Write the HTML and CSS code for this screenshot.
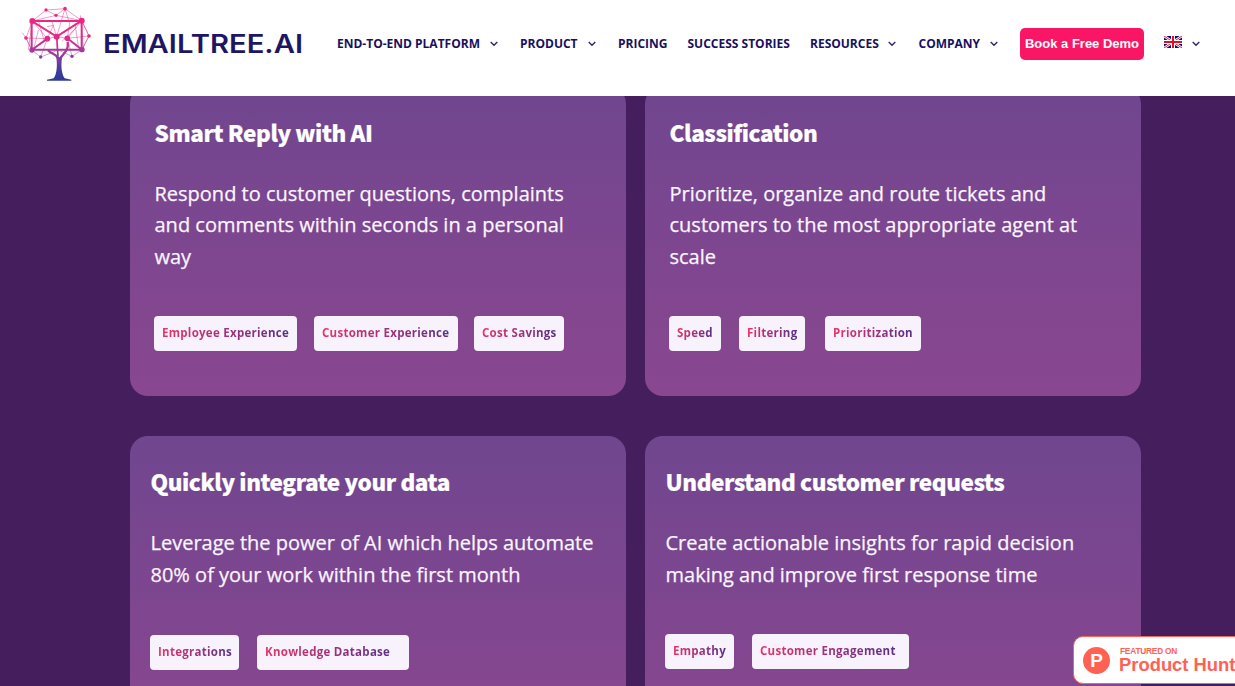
FILE: index.html
```html
<!DOCTYPE html>
<html lang="en">
<head>
<meta charset="utf-8">
<title>EmailTree.AI</title>
<link rel="stylesheet" href="styles.css">
</head>
<body>
<header class="header">
  <a class="logo">
    <svg class="tree" viewBox="0 0 255 270">
      <defs>
        <linearGradient id="treeFill" gradientUnits="userSpaceOnUse" x1="0" y1="20" x2="0" y2="240">
          <stop offset="0" stop-color="#f0247f"/><stop offset=".42" stop-color="#e22a8b"/><stop offset=".68" stop-color="#8e3d9f"/><stop offset=".86" stop-color="#3f3d9c"/><stop offset="1" stop-color="#2f3a98"/>
        </linearGradient>
      </defs>
      <g fill="none" stroke="url(#treeFill)">
        <path stroke-width="2" opacity=".7" d="M52 63 93 30 150 26 200 62 222 108 201 149 171 169 130 150 77 171 50 150 33 114 52 63M93 30 123 46 150 26M52 63 123 46 200 62M52 63 97 116 33 114M22 98 33 114 50 150M97 116 115 76 96 80M150 26 125 110 110 62M150 26 164 72 157 115 222 108M157 115 200 62M196 46 206 149M52 63 40 150M97 116 125 110 157 115M97 116 77 171M157 115 171 169M201 149 222 108 200 62M58 140 70 90M140 125 185 82M70 60 88 125M180 70 190 140"/>
        <path stroke-width="6" d="M52 63H200V149H50V63L125 110 200 62M50 150 97 116M201 149 157 115"/>
        <path stroke-width="5" d="M125 110 129 170"/>
        <path stroke-width="7" d="M130 180C128 160 112 166 99 151M135 176C146 158 162 153 158 126"/>
      </g>
      <g fill="url(#treeFill)">
        <path d="M123 166C128 195 126 222 116 235L96 239V242H169V239L149 235C138 219 137 190 143 165L134 172Z"/>
        <circle cx="93" cy="30" r="5"/><circle cx="150" cy="26" r="5.5"/><circle cx="123" cy="46" r="5"/>
        <circle cx="33" cy="114" r="5.5"/><circle cx="222" cy="108" r="5.5"/><circle cx="77" cy="171" r="5"/><circle cx="171" cy="169" r="5"/>
        <circle cx="52" cy="63" r="9"/><circle cx="200" cy="62" r="9"/><circle cx="97" cy="116" r="8.5"/><circle cx="157" cy="115" r="8.5"/><circle cx="125" cy="110" r="9"/><circle cx="51" cy="150" r="8"/><circle cx="201" cy="149" r="8"/>
      </g>
    </svg>
    <svg class="wordmark" viewBox="0 0 204 30"><text x="3" y="24" textLength="200" lengthAdjust="spacingAndGlyphs">EMAILTREE.AI</text></svg>
  </a>
  <nav class="nav">
    <a class="item n1">END-TO-END PLATFORM<svg class="chev" viewBox="0 0 8 6"><path d="M.7 1 4 4.3 7.3 1"/></svg></a>
    <a class="item n2">PRODUCT<svg class="chev" viewBox="0 0 8 6"><path d="M.7 1 4 4.3 7.3 1"/></svg></a>
    <a class="item n3">PRICING</a>
    <a class="item n4">SUCCESS STORIES</a>
    <a class="item n5">RESOURCES<svg class="chev" viewBox="0 0 8 6"><path d="M.7 1 4 4.3 7.3 1"/></svg></a>
    <a class="item n6">COMPANY<svg class="chev" viewBox="0 0 8 6"><path d="M.7 1 4 4.3 7.3 1"/></svg></a>
  </nav>
  <a class="demo">Book a Free Demo</a>
  <a class="lang">
    <svg class="flag" viewBox="0 0 18 12"><path fill="#0c0c7c" d="M0 0h18v12H0z"/><path stroke="#fff" stroke-width="2.6" d="M0 0 18 12M18 0 0 12"/><path stroke="#e02030" stroke-width="1" d="M0 0 18 12M18 0 0 12"/><path stroke="#fff" stroke-width="4" d="M9 0V12M0 6H18"/><path stroke="#e01020" stroke-width="2" d="M9 0V12M0 6H18"/></svg>
    <svg class="chev" viewBox="0 0 8 6"><path d="M.7 1 4 4.3 7.3 1"/></svg>
  </a>
</header>
<main class="grid">
  <section class="card first">
    <h2>Smart Reply with AI</h2>
    <p>Respond to customer questions, complaints<br>and comments within seconds in a personal<br>way</p>
    <div class="tags"><span class="tag t143"><b>Employee Experience</b></span><span class="tag t144"><b>Customer Experience</b></span><span class="tag t90"><b>Cost Savings</b></span></div>
  </section>
  <section class="card first">
    <h2>Classification</h2>
    <p>Prioritize, organize and route tickets and<br>customers to the most appropriate agent at<br>scale</p>
    <div class="tags"><span class="tag t52"><b>Speed</b></span><span class="tag t66"><b>Filtering</b></span><span class="tag t96"><b>Prioritization</b></span></div>
  </section>
  <section class="card second">
    <h2>Quickly integrate your data</h2>
    <p>Leverage the power of AI which helps automate<br>80% of your work within the first month</p>
    <div class="tags low"><span class="tag t89"><b>Integrations</b></span><span class="tag t152"><b>Knowledge Database</b></span></div>
  </section>
  <section class="card second">
    <h2>Understand customer requests</h2>
    <p>Create actionable insights for rapid decision<br>making and improve first response time</p>
    <div class="tags"><span class="tag t69"><b>Empathy</b></span><span class="tag t157"><b>Customer Engagement</b></span></div>
  </section>
</main>
<a class="hunt">
  <span class="disc">P</span>
  <span class="words"><span class="small">FEATURED ON</span><span class="big">Product Hunt</span></span>
</a>
</body>
</html>
```
FILE: styles.css
```css
* { box-sizing: border-box; }
body { margin: 0; width: 1235px; height: 686px; overflow: hidden; background: #451e5e; font-family: "Open Sans", sans-serif; }
.header { position: relative; z-index: 2; height: 96px; background: #fff; display: flex; align-items: flex-start; padding-left: 15px; }
.logo { display: flex; width: 322px; }
.tree { width: 85px; height: 90px; flex: none; }
.wordmark { width: 204px; height: 30px; margin-top: 28.5px; }
.wordmark text { font: 600 25px Inter, sans-serif; fill: #1d1664; }
.nav { display: flex; margin-top: 34px; width: 683px; }
.item { display: flex; align-items: center; justify-content: space-between; height: 18px; font-size: 12px; font-weight: 700; color: #17105f; white-space: nowrap; }
.n1 { width: 161px; margin-right: 22px; }
.n2 { width: 76px; margin-right: 22px; }
.n3 { width: 49px; margin-right: 20.5px; }
.n4 { width: 102px; margin-right: 20.5px; }
.n5 { width: 86px; margin-right: 22.5px; }
.n6 { width: 79px; }
.chev { width: 8px; height: 6px; fill: none; stroke: #2b2670; stroke-width: 1.4; flex: none; margin-top: 1px; }
.demo { width: 124px; height: 32px; margin-top: 28px; border-radius: 5px; background: #f91765; color: #fff; font: bold 13px/31px "Liberation Sans", sans-serif; text-align: center; white-space: nowrap; }
.lang { display: flex; align-items: center; gap: 10px; margin: 36px 0 0 20px; height: 12px; }
.lang .chev { margin-top: 4px; }
.flag { width: 18px; height: 12px; }
.grid { display: grid; grid-template-columns: 496px 496px; column-gap: 19px; row-gap: 40px; margin: -10px 0 0 130px; }
.card { border-radius: 18px; background: linear-gradient(#70468f, #894790) 0 0 / 100% 310px; color: #fff; }
.first { height: 310px; padding: 28px 24px 0; }
.second { height: 250px; padding: 27px 20px 0; border-radius: 18px 18px 0 0; }
h2 { margin: 0; height: 38px; padding-left: .5px; font: 900 22.5px/36px "Noto Sans CJK SC", sans-serif; letter-spacing: -.42px; -webkit-text-stroke: .2px #fff; white-space: nowrap; }
p { margin: 26px 0 0; padding-left: .5px; font-size: 20px; line-height: 31.5px; white-space: nowrap; color: #fbf5ff; -webkit-text-stroke: .25px #fbf5ff; }
.first p { margin-top: 25.8px; }
.tags { display: flex; gap: 17px; margin-top: 43px; }
.first .tags { margin-top: 43.7px; }
.second .tags { gap: 18px; margin-top: 44px; }
.second .low { margin-top: 45px; }
.tag { height: 35px; border-radius: 4px; background: #f8f2fd; padding: 0 8px; }
.tag b { display: inline-block; font-size: 11.5px; line-height: 34px; font-weight: 700; letter-spacing: .28px; white-space: nowrap; background: linear-gradient(90deg, #e83368, #582f87); background-clip: text; -webkit-background-clip: text; color: transparent; }
.t143 { width: 143px; } .t144 { width: 144px; } .t90 { width: 90px; margin-left: -1px; }
.t52 { width: 52px; } .t66 { width: 66px; margin-left: 1px; } .t96 { width: 96px; margin-left: 3px; }
.t89 { width: 89px; } .t152 { width: 152px; } .t69 { width: 69px; } .t157 { width: 157px; }
.hunt { position: absolute; z-index: 3; left: 1073px; top: 636px; width: 180px; height: 48px; border: 1px solid #ff6154; border-radius: 10px; background: #fff; color: #ff6154; display: flex; padding: 10px 0 0 9px; font-family: "Liberation Sans", sans-serif; font-weight: bold; }
.disc { width: 27px; height: 27px; border-radius: 50%; background: #ff6154; color: #fff; font-size: 19px; line-height: 28px; text-align: center; }
.words { display: flex; flex-direction: column; margin-left: 9px; white-space: nowrap; }
.small { font-size: 8.3px; line-height: 9px; letter-spacing: -.2px; padding-left: 1px; }
.big { font-size: 18.4px; line-height: 18px; }
```
